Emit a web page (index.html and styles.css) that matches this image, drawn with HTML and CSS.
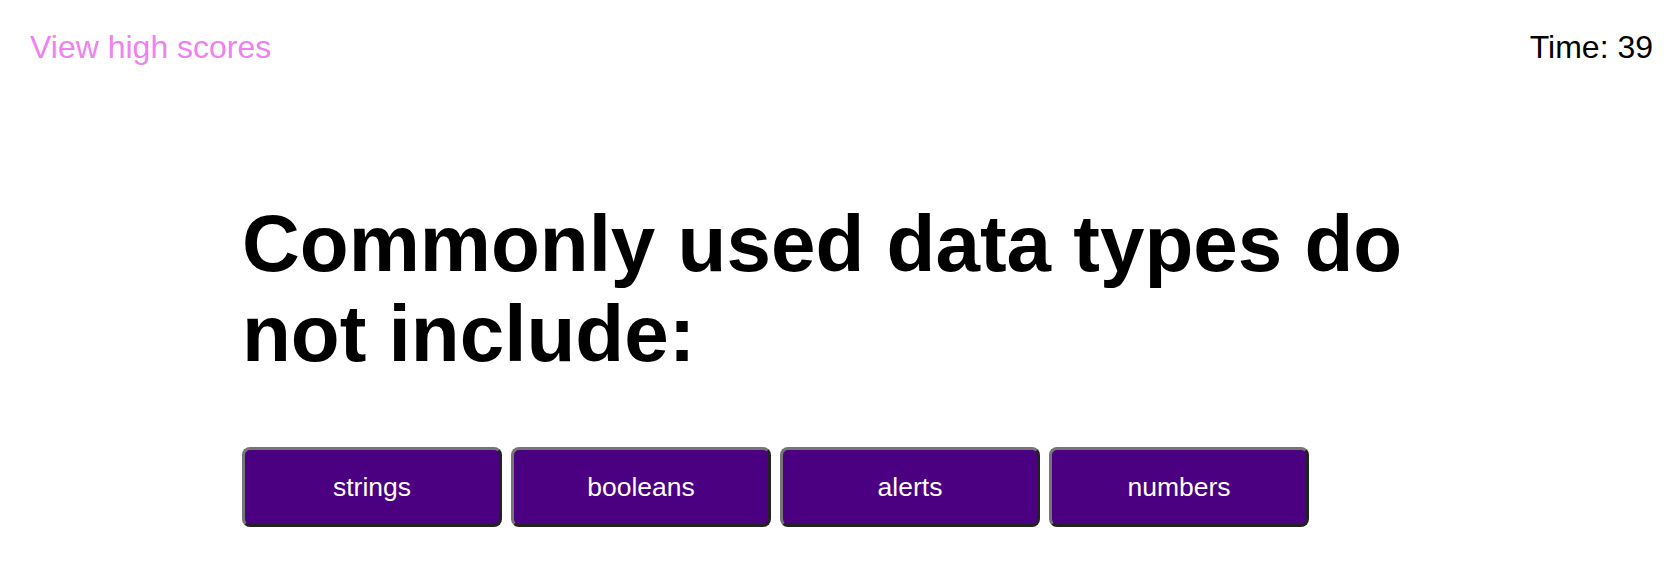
FILE: index.html
```html
<!DOCTYPE html>
<html lang="en">
<head>
<meta charset="utf-8">
<title>Code Quiz</title>
<link rel="stylesheet" href="styles.css">
</head>
<body>
<header class="top-bar">
  <a class="high-scores" href="#">View high scores</a>
  <div class="timer">Time: 39</div>
</header>
<main class="quiz">
  <h1 class="question">Commonly used data types do not include:</h1>
  <div class="choices">
    <button class="choice">strings</button>
    <button class="choice">booleans</button>
    <button class="choice">alerts</button>
    <button class="choice">numbers</button>
  </div>
</main>
</body>
</html>
```
FILE: styles.css
```css
html, body {
  margin: 0;
  padding: 0;
  background: #ffffff;
}

body {
  font-family: "Liberation Sans", Arial, sans-serif;
  color: #000000;
}

.top-bar {
  display: flex;
  justify-content: space-between;
  align-items: flex-start;
  padding: 29px 21px 0 30px;
  font-size: 32px;
  line-height: 37px;
}

.high-scores {
  color: #ee82ee;
  text-decoration: none;
}

.timer {
  color: #000000;
}

.quiz {
  width: 1190px;
  margin: 0 auto;
}

.question {
  margin: 133px 0 0 0;
  font-size: 80px;
  line-height: 90px;
  font-weight: bold;
}

.choices {
  display: flex;
  gap: 9px;
  margin-top: 68px;
}

.choice {
  width: 260px;
  height: 80px;
  background: #4b0082;
  color: #ffffff;
  font-family: "Liberation Sans", Arial, sans-serif;
  font-size: 26.5px;
  border-width: 3px;
  border-style: solid;
  border-color: #767676 #222222 #222222 #767676;
  border-radius: 8px;
  padding: 0;
  cursor: pointer;
}
```
